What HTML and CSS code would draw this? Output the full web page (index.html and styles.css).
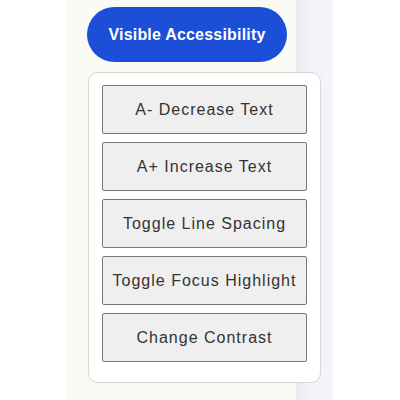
FILE: index.html
```html
<!DOCTYPE html>
<html lang="en">
<head>
    <meta charset="UTF-8">
    <meta name="viewport" content="width=device-width, initial-scale=1.0">
    <title>Visible Accessibility</title>
    <link rel="stylesheet" href="styles.css">
</head>
<body>
    <div class="page">
        <div class="gutter"></div>
        <div class="main">
            <div class="a11y-widget">
                <button class="a11y-toggle">Visible Accessibility</button>
                <div class="a11y-menu">
                    <button class="a11y-option">A- Decrease Text</button>
                    <button class="a11y-option">A+ Increase Text</button>
                    <button class="a11y-option">Toggle Line Spacing</button>
                    <button class="a11y-option">Toggle Focus Highlight</button>
                    <button class="a11y-option">Change Contrast</button>
                </div>
            </div>
        </div>
        <div class="aside"></div>
    </div>
</body>
</html>
```

FILE: styles.css
```css
body {
    margin: 0;
    padding: 0;
    font-family: "Liberation Sans", Arial, sans-serif;
    background-color: #ffffff;
}
.page {
    display: flex;
    height: 400px;
}
.gutter {
    width: 67px;
}
.main {
    width: 229px;
    background-color: #fafbf5;
}
.aside {
    width: 37px;
    background: linear-gradient(to right, #e8e9ee, #f2f3f9 35%, #f4f5fb);
}
.a11y-widget {
    position: relative;
    padding: 7px 0 0 20px;
}
.a11y-toggle {
    width: 200px;
    height: 55px;
    border: none;
    border-radius: 28px;
    background-color: #1d4ed8;
    color: #ffffff;
    font-family: "Liberation Sans", Arial, sans-serif;
    font-size: 16px;
    font-weight: bold;
    letter-spacing: 0.2px;
    cursor: pointer;
}
/* dropdown panel sits over the page */
.a11y-menu {
    position: absolute;
    top: 72px;
    left: 21px;
    width: 205px;
    padding: 12px 13px 20px 13px;
    background-color: #ffffff;
    border: 1px solid #d6d6d6;
    border-radius: 10px;
    display: flex;
    flex-direction: column;
    gap: 8px;
}
.a11y-option {
    height: 49px;
    width: 100%;
    background-color: #efefef;
    border: 1px solid #767676;
    border-radius: 2px;
    color: #333333;
    font-family: "Liberation Sans", Arial, sans-serif;
    font-size: 16px;
    letter-spacing: 1px;
    padding: 0;
    cursor: pointer;
}
```
